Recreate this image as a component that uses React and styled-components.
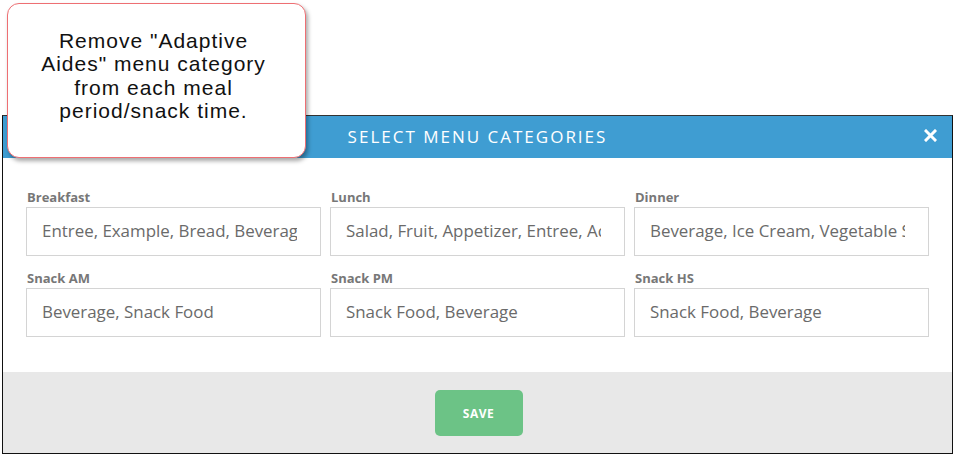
import React from 'react';
import styled, { createGlobalStyle } from 'styled-components';

const GlobalStyle = createGlobalStyle`
  body {
    margin: 0;
    background: #ffffff;
    font-family: "Open Sans", "Liberation Sans", sans-serif;
  }
`;

const meals = [
  { label: 'Breakfast', value: 'Entree, Example, Bread, Beverage, Adaptive Aides' },
  { label: 'Lunch', value: 'Salad, Fruit, Appetizer, Entree, Adaptive Aides' },
  { label: 'Dinner', value: 'Beverage, Ice Cream, Vegetable Side, Adaptive Aides' },
  { label: 'Snack AM', value: 'Beverage, Snack Food' },
  { label: 'Snack PM', value: 'Snack Food, Beverage' },
  { label: 'Snack HS', value: 'Snack Food, Beverage' },
];

const App = () => {
  return (
    <Page>
      <GlobalStyle />
      <Callout>
        Remove "Adaptive
        <br />
        Aides" menu category
        <br />
        from each meal
        <br />
        period/snack time.
      </Callout>
      <Modal>
        <Header>
          <Title>SELECT MENU CATEGORIES</Title>
          <CloseButton aria-label="close">
            <svg width="13" height="13" viewBox="0 0 13 13">
              <path d="M2 2 L11 11 M11 2 L2 11" stroke="#ffffff" strokeWidth="3" strokeLinecap="square" />
            </svg>
          </CloseButton>
        </Header>
        <Body>
          <Grid>
            {meals.map((m) => (
              <Field key={m.label}>
                <Label>{m.label}</Label>
                <Input readOnly value={m.value} />
              </Field>
            ))}
          </Grid>
        </Body>
        <Footer>
          <SaveButton>SAVE</SaveButton>
        </Footer>
      </Modal>
    </Page>
  );
};

export default App;

const Page = styled.div`
  position: relative;
  width: 953px;
  height: 454px;
  padding: 115px 0 0 2px;
  box-sizing: border-box;
  overflow: hidden;
`;

const Callout = styled.div`
  position: absolute;
  top: 3px;
  left: 7px;
  width: 299px;
  height: 155px;
  box-sizing: border-box;
  padding: 25px 6px 0 0;
  background: #ffffff;
  border: 1px solid #ee6f73;
  border-radius: 12px;
  box-shadow: 2px 3px 4px rgba(0, 0, 0, 0.35);
  font-family: "Liberation Sans", Arial, sans-serif;
  font-size: 21px;
  letter-spacing: 1px;
  line-height: 23.4px;
  color: #111111;
  text-align: center;
  z-index: 2;
`;

const Modal = styled.div`
  width: 951px;
  height: 339px;
  box-sizing: border-box;
  border: 1px solid #111111;
  border-top: 1px solid #333333;
  display: flex;
  flex-direction: column;
  background: #ffffff;
`;

const Header = styled.div`
  height: 42px;
  background: #3f9dd2;
  display: flex;
  align-items: center;
  justify-content: center;
  position: relative;
`;

const Title = styled.div`
  color: #ffffff;
  font-family: "Open Sans", "Liberation Sans", sans-serif;
  font-size: 17px;
  letter-spacing: 2px;
  margin: 0 0 2px 0;
`;

const CloseButton = styled.div`
  position: absolute;
  right: 15px;
  top: 13px;
  display: flex;
`;

const Body = styled.div`
  padding: 30px 23px 35px 23px;
`;

const Grid = styled.div`
  display: grid;
  grid-template-columns: repeat(3, 295px);
  column-gap: 9px;
  row-gap: 13px;
`;

const Field = styled.div`
  display: flex;
  flex-direction: column;
`;

const Label = styled.div`
  font-size: 13px;
  font-weight: 700;
  line-height: 18px;
  color: #777777;
  margin: 0 0 1px 1px;
`;

const Input = styled.input`
  height: 49px;
  box-sizing: border-box;
  border: 1px solid #d4d4d4;
  padding: 0 23px 2px 15px;
  font-family: "Open Sans", "Liberation Sans", sans-serif;
  font-size: 16.9px;
  color: #6a6a6a;
  outline: none;
  background: #ffffff;
`;

const Footer = styled.div`
  flex: 1;
  background: #e8e8e8;
  display: flex;
  justify-content: center;
  padding-top: 18px;
  box-sizing: border-box;
`;

const SaveButton = styled.button`
  width: 88px;
  height: 46px;
  margin-left: 2px;
  border: none;
  border-radius: 5px;
  background: #6cc386;
  color: #ffffff;
  font-family: "Open Sans", "Liberation Sans", sans-serif;
  font-size: 12px;
  font-weight: 700;
  letter-spacing: 0.5px;
`;
